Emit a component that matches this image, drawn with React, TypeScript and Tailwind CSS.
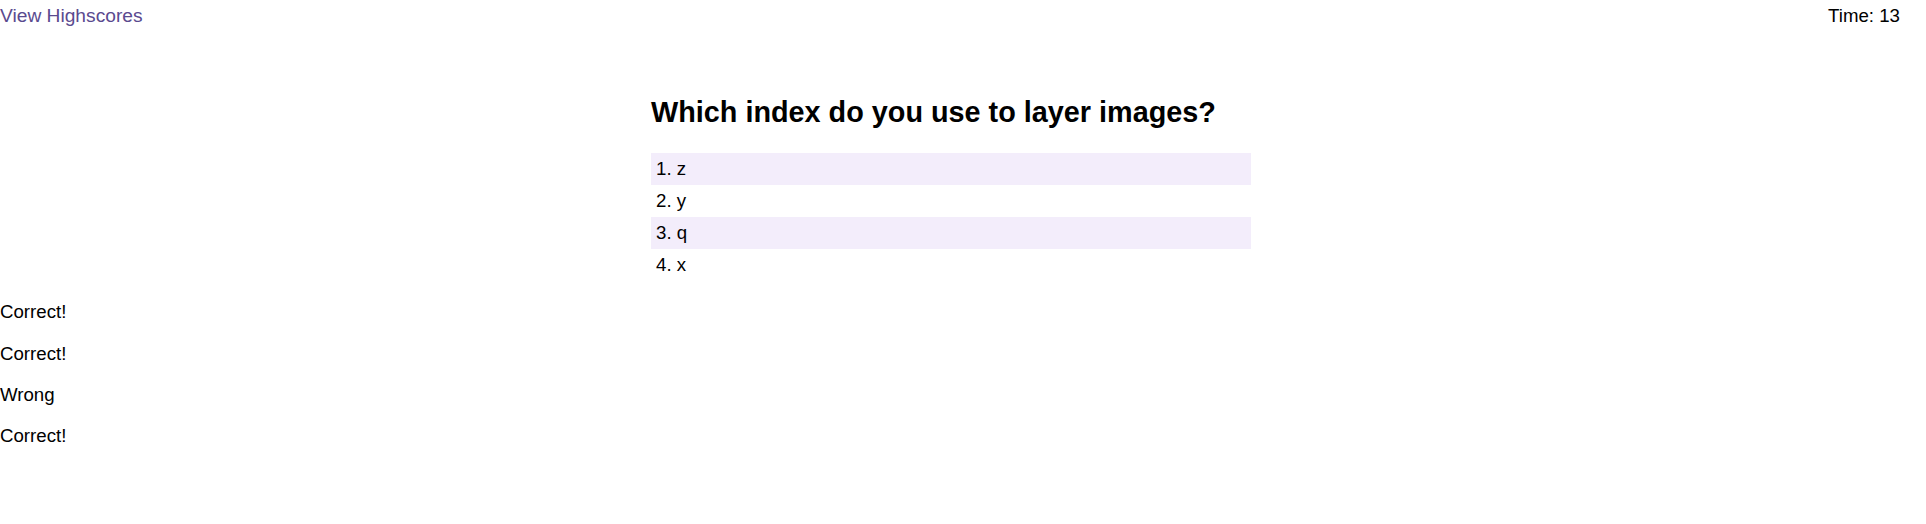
import React from "react";

const answers = ["1. z", "2. y", "3. q", "4. x"];
const feedback = ["Correct!", "Correct!", "Wrong", "Correct!"];

export default function App() {
  return (
    <div className="min-h-[524px] w-full bg-white text-[18.67px] leading-[normal] text-black font-['Liberation_Sans',Arial,sans-serif]">
      <header className="flex h-[27px] items-start justify-between pt-[5px] pr-[26px]">
        <a className="cursor-pointer text-[19.2px] leading-[normal] text-[#5a4a8f]">View Highscores</a>
        <span>Time: 13</span>
      </header>
      <main className="mx-auto w-[624px] pt-[68.6px]">
        <h2 className="text-[28.8px] font-bold leading-[normal]">Which index do you use to layer images?</h2>
        <ul className="mt-[24.3px] w-[600px]">
          {answers.map((a, i) => (
            <li
              key={a}
              className={`flex h-[32px] items-center px-[5px] ${i % 2 === 0 ? "bg-[#f3edfb]" : "bg-white"}`}
            >
              {a}
            </li>
          ))}
        </ul>
      </main>
      <section className="mt-[20.5px] flex flex-col gap-[19.2px]">
        {feedback.map((f, i) => (
          <p key={i}>{f}</p>
        ))}
      </section>
    </div>
  );
}
